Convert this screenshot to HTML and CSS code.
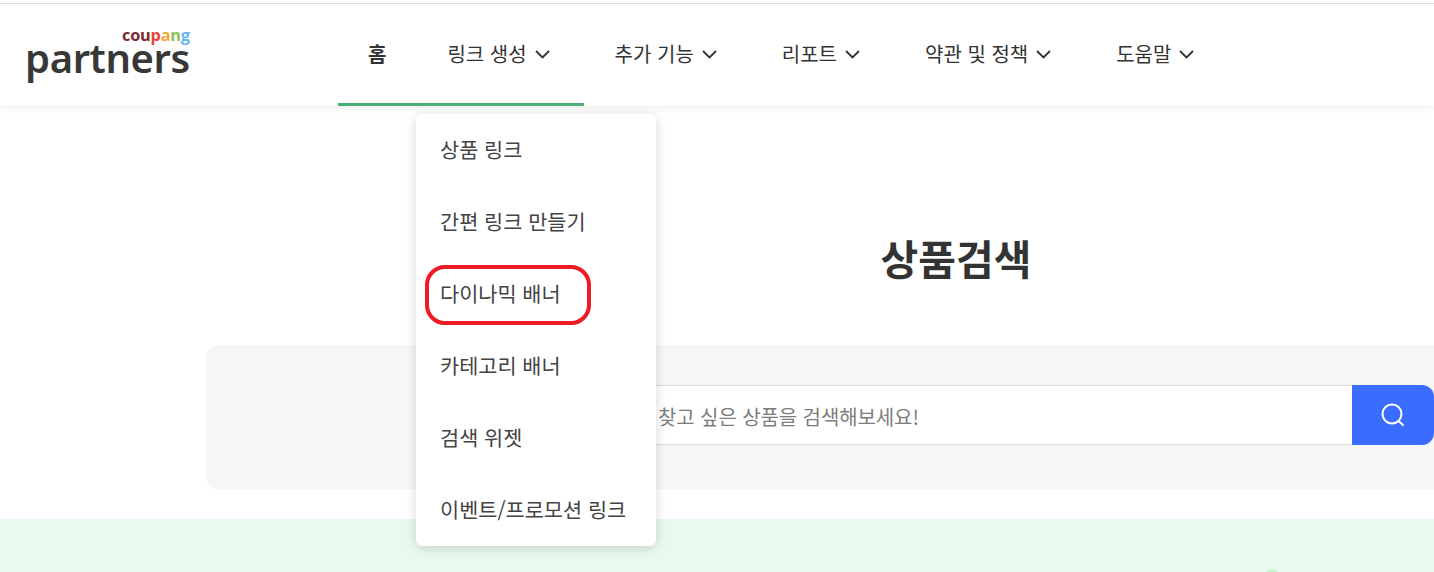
FILE: index.html
```html
<!DOCTYPE html>
<html lang="ko">
<head>
<meta charset="utf-8">
<title>쿠팡 파트너스 상품검색</title>
<link rel="stylesheet" href="styles.css">
</head>
<body>
<header class="header">
  <a class="logo" href="#">
    <span class="logo-top"><span class="c1">cou</span><span class="c2">p</span><span class="c3">a</span><span class="c4">n</span><span class="c5">g</span></span>
    <span class="logo-main">partners</span>
  </a>
  <nav class="nav">
    <a class="nav-item home active" href="#">홈</a>
    <a class="nav-item active" href="#">링크 생성<svg class="chev" viewBox="0 0 15 9"><path d="M1 1l6.500 6.500L14 1"/></svg></a>
    <a class="nav-item" href="#">추가 기능<svg class="chev" viewBox="0 0 15 9"><path d="M1 1l6.500 6.500L14 1"/></svg></a>
    <a class="nav-item" href="#">리포트<svg class="chev" viewBox="0 0 15 9"><path d="M1 1l6.500 6.500L14 1"/></svg></a>
    <a class="nav-item" href="#">약관 및 정책<svg class="chev" viewBox="0 0 15 9"><path d="M1 1l6.500 6.500L14 1"/></svg></a>
    <a class="nav-item" href="#">도움말<svg class="chev" viewBox="0 0 15 9"><path d="M1 1l6.500 6.500L14 1"/></svg></a>
  </nav>
</header>

<ul class="menu">
  <li class="menu-item">상품 링크</li>
  <li class="menu-item">간편 링크 만들기</li>
  <li class="menu-item marked">다이나믹 배너</li>
  <li class="menu-item">카테고리 배너</li>
  <li class="menu-item">검색 위젯</li>
  <li class="menu-item">이벤트/프로모션 링크</li>
</ul>

<main class="main">
  <h1 class="title">상품검색</h1>
  <section class="panel">
    <div class="search">
      <div class="search-input">찾고 싶은 상품을 검색해보세요!</div>
      <button class="search-btn" type="button" aria-label="검색">
        <svg class="search-icon" viewBox="0 0 24 24"><circle cx="11" cy="11" r="9.500"/><path d="M17.500 18l5 4.500"/></svg>
      </button>
    </div>
  </section>
</main>

<section class="band"><span class="dot"></span></section>
</body>
</html>
```
FILE: styles.css
```css
*, *::before, *::after { box-sizing: border-box; }
html, body { margin: 0; height: 572px; overflow: hidden; background: #fff; }
body {
  position: relative;
  border-top: 1px solid transparent;
  font-family: "Noto Sans CJK KR", "Noto Sans", sans-serif;
  color: #333;
}
a { color: inherit; text-decoration: none; }

.header {
  height: 103px;
  margin-top: 2px;
  border-top: 1px solid #ddd;
  padding-left: 25px;
  display: flex;
  background: #fff;
  box-shadow: 0 2px 8px rgba(0, 0, 0, .07);
  position: relative;
  z-index: 1;
}
.logo {
  width: 313px;
  display: flex;
  flex-direction: column;
  align-items: flex-start;
  padding-top: 22px;
}
.logo-top {
  margin-left: 97px;
  height: 14px;
  font: 700 16.3px/18px "Open Sans", sans-serif;
  letter-spacing: -.2px;
  white-space: nowrap;
}
.c1 { color: #7a2a2e; }
.c2 { color: #e8443a; }
.c3 { color: #f0a93c; }
.c4 { color: #8cbf4f; }
.c5 { color: #66b5ee; }
.logo-main {
  font: 600 40px/36px "Noto Sans", sans-serif;
  letter-spacing: -.4px;
  color: #383838;
}

.nav { display: flex; height: 102px; }
.nav-item {
  display: flex;
  align-items: center;
  gap: 8px;
  padding: 0 34px 4px 31px;
  height: 102px;
  font-size: 20px;
  white-space: nowrap;
  color: #333;
}
.nav-item.active { box-shadow: inset 0 -3px 0 #4cae78; }
.nav-item.home { font-weight: 700; padding-left: 30px; padding-right: 30px; }
.chev { width: 15px; height: 9px; fill: none; stroke: #333; stroke-width: 1.8; margin-top: 3px; }

.menu {
  position: absolute;
  left: 416px;
  top: 113px;
  width: 240px;
  margin: 0;
  padding: 0;
  list-style: none;
  background: #fff;
  border-radius: 6px;
  box-shadow: 0 2px 12px rgba(0, 0, 0, .16);
  z-index: 2;
}
.menu-item {
  position: relative;
  height: 72px;
  padding: 0 0 2px 24px;
  display: flex;
  align-items: center;
  font-size: 20.8px;
  color: #444;
  white-space: nowrap;
}
.marked::after {
  content: "";
  position: absolute;
  left: 9px;
  top: 7px;
  width: 166px;
  height: 60px;
  border: 4px solid #ed1c24;
  border-radius: 20px;
}

.main { width: 1500px; margin-left: 206px; }
.title {
  margin: 0;
  padding-top: 121px;
  height: 239px;
  text-align: center;
  font-size: 41px;
  line-height: 60px;
  font-weight: 700;
  color: #333;
}
.panel {
  height: 144px;
  background: #f6f6f6;
  border-radius: 12px;
  padding-top: 40px;
  display: flex;
  justify-content: center;
}
.search { display: flex; width: 956px; height: 60px; }
.search-input {
  flex: 1;
  background: #fff;
  border-top: 1px solid #ddd;
  border-bottom: 1px solid #ddd;
  padding-left: 180px;
  font-size: 20px;
  line-height: 61px;
  letter-spacing: -.1px;
  color: #7c7c7c;
  white-space: nowrap;
}
.search-btn {
  width: 82px;
  border: 0;
  padding: 0;
  background: #3a6dff;
  border-radius: 0 12px 12px 0;
  display: flex;
  align-items: center;
  justify-content: center;
}
.search-icon { width: 24px; height: 24px; fill: none; stroke: #fff; stroke-width: 2; }

.band {
  position: relative;
  height: 53px;
  margin-top: 30px;
  background: #e8f9ef;
  overflow: hidden;
}
.dot {
  position: absolute;
  left: 1260px;
  top: 51px;
  width: 24px;
  height: 24px;
  border-radius: 50%;
  background: #bdf2c6;
}
```
